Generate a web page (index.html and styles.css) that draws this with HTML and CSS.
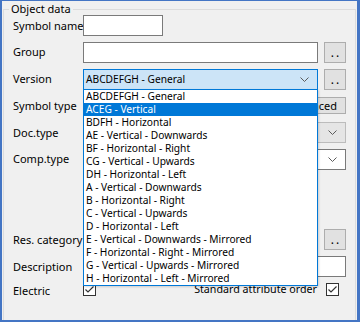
FILE: index.html
```html
<!DOCTYPE html>
<html>
<head>
<meta charset="utf-8">
<link rel="stylesheet" href="styles.css">
</head>
<body>
<div class="window">
  <div class="group">
    <div class="legend">Object data</div>
    <div class="rows">
      <span class="lbl">Symbol name</span>
      <div class="tb short"></div>
      <span></span>

      <span class="lbl">Group</span>
      <div class="tb"></div>
      <div class="btn dots">..</div>

      <span class="lbl">Version</span>
      <div class="combo active"><span class="ctext">ABCDEFGH - General</span><svg class="chev" width="9" height="5" viewBox="0 0 9 5"><polyline points="0.5,0.5 4.5,4.5 8.5,0.5" fill="none" stroke="#5a5a5a" stroke-width="1"/></svg></div>
      <div class="btn dots">..</div>

      <span class="lbl">Symbol type</span>
      <div class="wide right"><div class="btn adv">Advanced</div></div>

      <span class="lbl">Doc.type</span>
      <div class="wide combo disabled"><span class="ctext"></span><svg class="chev" width="9" height="5" viewBox="0 0 9 5"><polyline points="0.5,0.5 4.5,4.5 8.5,0.5" fill="none" stroke="#5a5a5a" stroke-width="1"/></svg></div>

      <span class="lbl">Comp.type</span>
      <div class="wide combo"><span class="ctext"></span><svg class="chev" width="9" height="5" viewBox="0 0 9 5"><polyline points="0.5,0.5 4.5,4.5 8.5,0.5" fill="none" stroke="#5a5a5a" stroke-width="1"/></svg></div>

      <span class="lbl"></span><span></span><span></span>
      <span class="lbl"></span><span></span><span></span>

      <span class="lbl">Res. category</span>
      <div class="tb"></div>
      <div class="btn dots">..</div>

      <span class="lbl">Description</span>
      <div class="wide tb"></div>

      <span class="lbl top">Electric</span>
      <div class="wide checkrow">
        <span class="cb"><svg width="11" height="11" viewBox="0 0 11 11"><polyline points="1.5,5.5 4,8 9.5,2.5" fill="none" stroke="#333" stroke-width="1.2"/></svg></span>
        <span class="sao">Standard attribute order</span>
        <span class="cb"><svg width="11" height="11" viewBox="0 0 11 11"><polyline points="1.5,5.5 4,8 9.5,2.5" fill="none" stroke="#333" stroke-width="1.2"/></svg></span>
      </div>
    </div>
  </div>

  <div class="dropdown">
    <div class="item">ABCDEFGH - General</div>
    <div class="item sel">ACEG - Vertical</div>
    <div class="item">BDFH - Horizontal</div>
    <div class="item">AE - Vertical - Downwards</div>
    <div class="item">BF - Horizontal - Right</div>
    <div class="item">CG - Vertical - Upwards</div>
    <div class="item">DH - Horizontal - Left</div>
    <div class="item">A - Vertical - Downwards</div>
    <div class="item">B - Horizontal - Right</div>
    <div class="item">C - Vertical - Upwards</div>
    <div class="item">D - Horizontal - Left</div>
    <div class="item">E - Vertical - Downwards - Mirrored</div>
    <div class="item">F - Horizontal - Right - Mirrored</div>
    <div class="item">G - Vertical - Upwards - Mirrored</div>
    <div class="item">H - Horizontal - Left - Mirrored</div>
  </div>
</div>
</body>
</html>
```

FILE: styles.css
```css
* { box-sizing: border-box; }
html, body { margin: 0; padding: 0; }
body {
  font-family: "Noto Sans", "Open Sans", sans-serif;
  font-size: 11px;
  color: #000;
  background: #f0f0f0;
}
.window {
  position: relative;
  width: 360px;
  height: 322px;
  background: #f0f0f0;
  border-style: solid;
  border-color: #4475c4;
  border-width: 1px 3px 2px 2px;
  overflow: hidden;
}
.group {
  position: relative;
  margin: 8px 1px 0 1px;
  border: 1px solid #dcdcdc;
  border-bottom: none;
  height: 330px;
}
.legend {
  position: absolute;
  top: -9px;
  left: 5px;
  padding: 0 2px;
  background: #f0f0f0;
  line-height: 16px;
}
.rows {
  display: grid;
  grid-template-columns: 70px 235px 28px;
  row-gap: 5.8px;
  grid-auto-rows: 21px;
  padding: 5px 0 0 9px;
}
.lbl {
  align-self: center;
  white-space: nowrap;
  line-height: 16px;
}
.lbl.top { align-self: start; }
.tb {
  background: #fff;
  border: 1px solid #7a7a7a;
}
.tb.short { width: 80px; }
.wide { grid-column: 2 / span 2; }
.btn {
  background: #e1e1e1;
  border: 1px solid #adadad;
  display: flex;
  align-items: center;
  justify-content: center;
}
.dots {
  width: 22px;
  justify-self: end;
  letter-spacing: 2px;
  padding-left: 2px;
  line-height: 19px;
  font-size: 12px;
}
.right { display: flex; justify-content: flex-end; align-items: flex-start; }
.adv { height: 17px; margin-top: 2px; padding: 0 8px; line-height: 15px; }
.combo {
  display: flex;
  align-items: center;
  border: 1px solid #7a7a7a;
  background: #fff;
  padding: 0 0 0 2px;
}
.combo.active { background: #cce4f7; border-color: #0078d7; }
.combo.disabled { background: #e5e5e5; border-color: #bcbcbc; }
.ctext { flex: 1; line-height: 19px; white-space: nowrap; font-size: 10.2px; }
.chev { margin-right: 8px; flex: none; }
.checkrow {
  display: flex;
  align-items: flex-start;
}
.cb {
  width: 13px;
  height: 13px;
  border: 1px solid #333;
  background: #fff;
  display: flex;
  align-items: center;
  justify-content: center;
  flex: none;
}
.sao { margin-left: auto; margin-right: 9px; line-height: 13px; font-size: 10.7px; }
.checkrow .cb:last-child { margin-right: 7px; }
.dropdown {
  position: absolute;
  left: 81px;
  top: 88px;
  width: 235px;
  background: #fff;
  border: 1px solid #0078d7;
  box-shadow: 1px 1px 2px rgba(0,0,0,0.15);
}
.item {
  height: 13px;
  line-height: 13px;
  padding-left: 2px;
  white-space: nowrap;
  font-size: 10.2px;
}
.item.sel { background: #0078d7; color: #fff; }
```
